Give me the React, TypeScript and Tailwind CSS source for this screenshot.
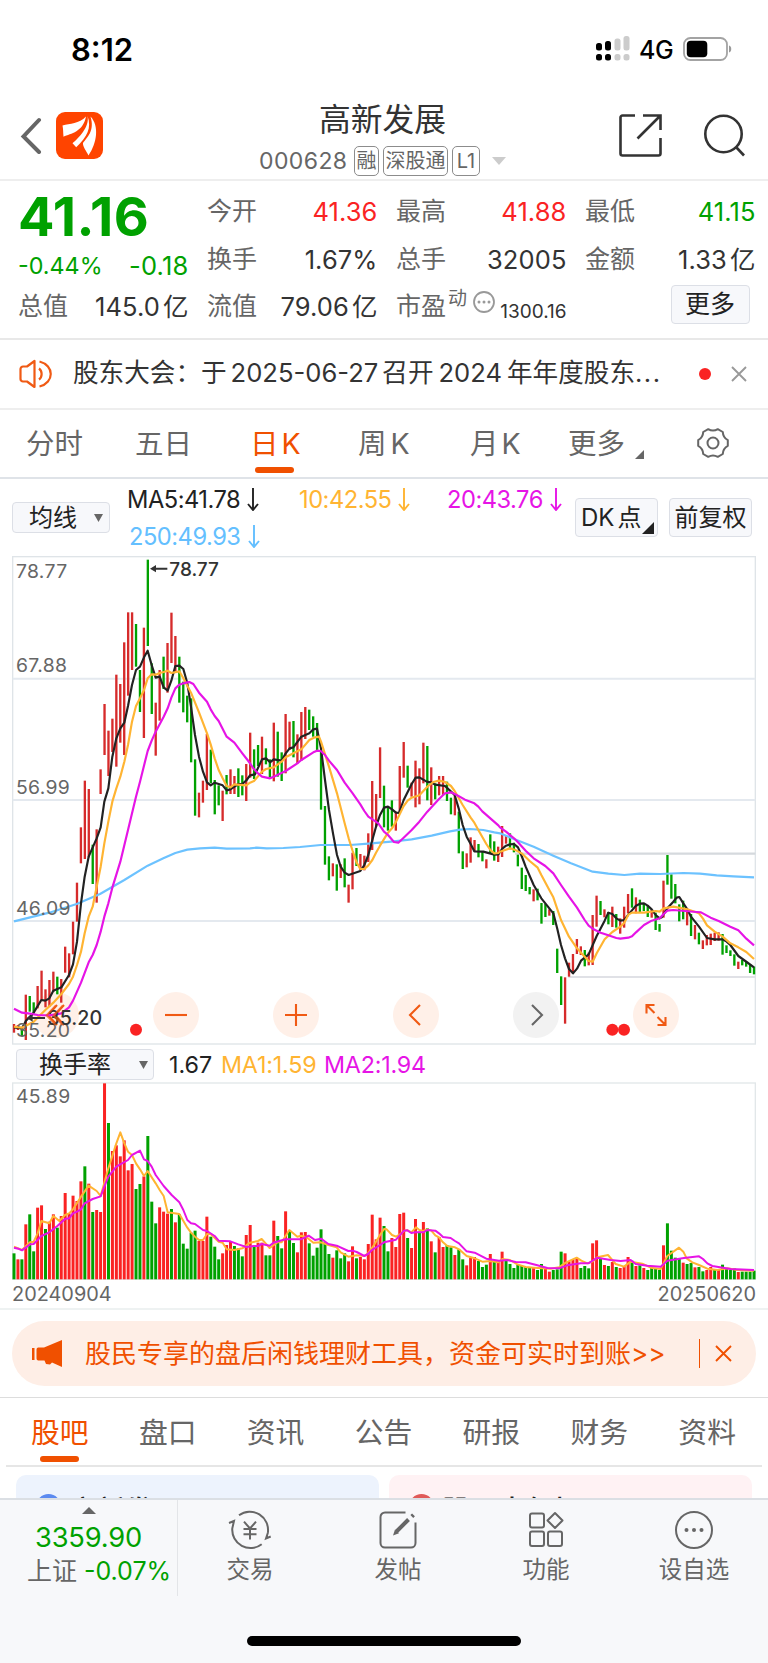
import React from 'react';

const CANDLES =
  'r1422-1448 r1425-1440 g1435-1458 r1334-1470 g1338-1385 g1357-1390 r1308-1375 r1262-1350 r1318-1372 r1290-1370 r1265-1325 g1280-1333 r1287-1358 r1190-1268 r1210-1282 r1115-1213 r998-1115 r832-940 r692-927 r717-922 g884-1002 r838-1058 r658-732 r462-615 r542-678 r506-606 r374-650 r402-578 r277-615 r187-437 r187-360 g222-350 g360-486 r233-564 g29-288 g340-492 r458-617 r360-512 g320-417 r279-428 r188-339 r258-365 g320-458 g395-487 g437-517 g445-637 g628-797 r728-802 r692-758 r552-720 g599-700 g690-793 g706-766 r722-813 g675-733 r658-732 r678-732 g655-741 g676-736 r642-753 ' +
  'r548-683 g598-687 g585-648 r560-672 g595-643 g628-682 r518-694 g545-680 g607-693 r492-670 r515-600 g513-622 r553-640 r486-632 r471-567 g479-540 g499-560 g519-606 g602-779 g768-944 g919-991 r940-979 g943-1022 r943-984 g925-1012 r1004-1058 r908-1018 g894-948 r912-960 r917-961 r850-936 r693-900 r732-830 r592-744 g707-832 g770-842 g751-830 r785-842 r648-788 r576-683 g647-713 r698-740 r632-772 r655-763 r578-700 g588-751 r652-765 g700-748 r678-736 r678-736 g695-753 g743-793 r735-796 g785-910 g904-957 r910-952 r862-938 r870-905 g882-922 g905-934 r928-955 g853-912 g874-932 r890-936 ' +
  'r828-921 r858-881 g850-898 g878-907 g914-949 g953-1017 g975-1023 g1011-1033 r1018-1054 g1016-1051 g1059-1121 g1062-1101 r1078-1097 g1083-1125 g1196-1269 g1279-1365 r1282-1421 r1238-1280 r1212-1270 r1167-1212 r1189-1215 g1200-1249 r1208-1246 r1095-1245 r1037-1130 g1053-1095 r1078-1102 g1086-1123 r1070-1131 g1092-1133 r1105-1151 r1070-1133 r1032-1090 g1015-1073 r1042-1090 g1049-1088 g1062-1083 g1065-1101 r1080-1103 g1088-1140 g1122-1145 r992-1103 g915-1004 g973-1046 g1002-1060 g1063-1114 g1052-1108 r1078-1126 g1092-1158 r1125-1168 g1148-1183 r1171-1197 r1155-1186 r1151-1185 r1148-1173 r1147-1172 g1152-1214 g1186-1209 g1201-1218 g1213-1247 r1235-1257 g1230-1246 g1235-1250 g1242-1269 g1250-1273';

const TURNOVER =
  'g640 r658 g658 r553 g523 g634 r503 r496 g567 r545 r523 g563 r528 r459 r520 r467 r483 r424 g379 r431 g516 r510 r516 r130 g249 r333 r316 r349 r301 r391 r372 g447 g432 r409 g288 g485 g550 r502 r515 r521 g507 r547 g523 g611 g626 g578 g572 r603 r603 r530 g590 g620 g658 r640 r615 r606 g618 g625 g649 r585 r555 g617 r608 r608 g646 g646 r542 g588 g625 r514 g572 g609 r637 r577 r576 g610 g647 g623 g568 g607 g642 r653 g631 g655 g640 r664 r619 g655 r651 r658 r612 r524 r598 r533 g558 ' +
  'g634 r594 r621 r522 r518 g594 r624 r537 g575 r546 g565 r604 g637 r591 r621 g615 g622 r645 g628 g658 r676 r653 r651 g663 g681 g674 r642 g665 r665 r635 g660 g672 g684 g675 g678 g681 g684 r684 g690 g672 r686 r695 g690 g688 g635 r640 r664 r658 r654 g684 g678 g685 r610 r601 g655 r675 g678 r666 g681 r684 r678 r651 g662 r678 g676 r684 g690 g684 g687 g690 r616 g550 g632 g653 g655 r668 g672 g669 r682 g681 g694 r690 r681 g690 r690 g674 g684 g690 g685 r696 g695 g695 g695 g692';

type Segment = [dx: number, dy: number, points: string];

function joinSegments(segments: Segment[]): string {
  return segments
    .flatMap(([dx, dy, points]) =>
      points.split(' ').map((p) => {
        const [x, y] = p.split(',').map(Number);
        return `${x + dx},${y + dy}`;
      }),
    )
    .join(' ');
}

const MA5 = joinSegments([
  [0, 0, '42,1432 66,1435 78,1412 101,1388 124,1350 136,1352 148,1345 160,1322 184,1312 207,1275 219,1243 231,1175 243,1060 254,980 266,920 290,865 302,832 313,755 325,715 337,620 349,565 361,535 373,518 384,468 396,405 408,360 420,350 432,322 443,302 455,345 467,383 479,380 491,412 503,422 514,392 526,348 538,347 550,357 562,400 573,470 585,555 597,620 609,665 621,697 632,706 644,698 668,706 680,721 691,718 715,702 727,702 740,690'],
  [750, 390, '0,286 15,283 36,238 48,235 60,247 71,238 95,242 107,220 119,205 130,202 154,170 178,160 190,148 201,146 213,205 225,300 237,390 249,460 261,525 272,560 284,578 296,585 331,573 343,555 355,525 367,480 378,440 390,405 402,383 414,380 426,388 438,398 447,399 461,360 485,312 497,293 508,292 530,305 545,308 555,314 585,318 600,332 614,345 626,385 638,435 650,470 662,492 673,514 700,515 733,524 745,523'],
  [1500, 690, '6,207 18,197 30,193 42,192 54,202 65,228 77,260 101,315 124,355 148,385 160,400 172,447 183,495 195,535 207,567 219,580 231,566 243,542 266,523 290,468 314,422 325,398 337,402 349,415 361,422 373,420 385,404 408,377 420,371 432,370 443,377 455,388 467,405 479,415 485,412 502,385 520,365 530,353 538,351 550,370 562,388 573,410 597,440 621,474 644,478 668,478 680,485 691,495 715,528 740,546 762,562'],
]);

const MA10 = joinSegments([
  [0, 0, '42,1430 66,1433 101,1415 136,1380 160,1358 184,1332 207,1302 219,1280 231,1245 243,1205 254,1150 266,1100 278,1070 290,1010 302,950 313,880 325,815 337,755 349,715 361,680 373,635 384,585 396,515 408,468 420,445 432,420 443,385 455,373 467,374 479,369 491,366 503,362 514,369 538,364 550,385 573,428 597,487 621,550 632,583 644,625 656,660 668,685 680,708 691,712 703,703 739,706'],
  [750, 390, '0,308 12,303 36,275 48,267 71,262 95,245 107,232 130,220 154,208 178,180 195,172 207,170 213,185 237,260 261,340 284,430 296,475 308,513 320,548 331,567 343,567 355,556 367,540 378,518 390,497 414,458 426,445 438,425 461,378 473,362 485,353 508,346 532,320 550,306 567,302 585,306 603,318 614,333 638,375 662,413 673,428 685,450 709,492 721,510 733,520 745,519'],
  [1500, 690, '0,215 30,205 48,211 65,220 89,243 113,263 124,285 148,330 160,352 183,420 207,470 231,505 254,530 266,543 278,545 290,520 314,478 337,456 361,440 373,428 385,404 396,398 432,398 467,393 479,395 491,385 520,380 562,388 597,400 609,416 621,436 644,455 668,470 691,490 715,502 739,516 762,537'],
]);

const MA20 = joinSegments([
  [0, 0, '42,1376 66,1388 90,1391 113,1395 148,1396 184,1390 207,1372 219,1352 231,1325 243,1298 266,1237 278,1215 290,1185 302,1145 313,1100 325,1060 337,1013 361,935 384,840 408,740 420,695 443,603 455,572 467,545 491,500 503,475 514,443 526,415 538,404 550,400 562,397 568,396 580,402 597,428 621,455 632,478 644,498 656,513 680,560 703,578 727,610 745,633'],
  [750, 390, '0,250 12,268 24,280 36,290 60,295 71,290 107,273 142,250 154,240 190,217 201,212 212,213 225,225 237,242 261,270 284,308 308,340 331,373 343,393 355,410 385,430 402,455 414,465 432,486 445,488 461,473 485,450 508,425 532,395 567,357 585,340 603,337 620,345 645,359 673,370 685,380 697,394 721,415 745,436'],
  [1500, 690, '0,142 18,155 42,175 54,187 77,212 101,235 136,258 160,280 183,315 207,350 231,383 254,420 266,437 278,446 302,458 325,466 349,474 361,476 385,473 396,469 408,457 432,435 455,422 479,415 491,402 502,392 520,390 590,396 603,397 632,413 656,423 691,440 715,451 739,476 762,496'],
]);

const MA250 = joinSegments([
  [0, 0, '42,1114 148,1088 230,1062 300,1032 373,990 443,947 490,925 526,909 562,899 600,895 644,893 680,896'],
  [750, 390, '0,505 20,503 50,505 100,504 150,501 212,495 300,495 355,491 432,484 485,478 545,467 600,454 630,449 660,447 700,450 733,457'],
  [1500, 690, '0,160 42,177 101,200 160,227 213,250 278,275 325,281 373,285 420,281 480,282 550,279 600,281 650,286 700,289 762,292'],
]);

const VOL_MA1 = joinSegments([
  [0, 0, '42,620 66,630 78,618 90,607 101,605 113,580 124,543 148,550 160,528 178,543 195,525 207,520 219,508 243,470 266,437 290,453 302,468 325,385 349,310 361,277 373,310 384,335 396,345 408,370 420,388 432,408 443,393 467,430 479,450 491,468 503,517 538,522 562,563 573,578 585,590 597,600 609,600 621,582 632,582 656,605 668,608 680,628 703,630 727,625 750,608 774,603 785,597 797,610 809,624 832,607 845,607 868,570 892,590 903,587 920,592 940,608 963,607 985,615 1010,622 1022,637 1045,650 1070,646 1093,648 1104,640 1122,615 1140,585 1152,567'],
  [1152, 0, '8,568 24,585 36,590 48,583 60,573 70,570 82,577 96,562 106,570 118,573 130,568 142,572 154,586 165,592 177,607 190,618 213,622 225,628 248,648 272,655 295,665 320,663 343,667 355,657 378,660 400,673 425,681 450,683 475,685 500,686 525,682 545,668 578,653 592,662 610,670 625,665 640,652 672,645 695,672 720,680 740,665 775,671 800,683 830,687 850,648 885,623 898,635 908,655 925,667 945,675 970,686 1000,690 1030,685 1060,690 1110,692'],
]);

const VOL_MA2 = joinSegments([
  [0, 0, '42,623 55,626 66,631 78,622 90,613 101,612 124,588 148,577 172,558 195,537 207,535 219,520 231,515 243,508 254,490 278,477 302,469 313,440 325,410 349,380 361,373 384,360 396,345 420,332 432,358 443,363 455,380 467,405 491,438 515,465 538,487 550,510 562,540 573,550 585,552 609,570 621,573 644,588 656,602 691,604 715,613 739,621 762,618 774,618 785,612 809,617 820,608 856,598 903,598 926,587 945,600 963,596 985,612 1010,617 1045,633 1058,632 1070,636 1093,648 1104,642 1116,630 1140,615'],
  [1152, 0, '0,607 36,599 60,572 70,571 82,579 94,577 106,577 118,577 130,570 154,572 165,580 177,591 200,594 213,603 225,610 248,634 272,638 307,656 345,662 370,660 395,666 425,667 460,676 490,684 525,685 550,676 590,670 613,670 640,653 680,660 710,663 740,660 755,672 790,677 830,680 850,662 900,654 945,649 957,657 970,670 985,678 1040,687 1110,690'],
]);

const barX = (i: number) => 42 + i * 11.809;

function StatusBar() {
  return (
    <div className="flex h-[90px] shrink-0 items-center justify-between pr-[36px] pl-[71px] pt-[8px]">
      <span className="text-[31px] leading-none font-semibold text-black">8:12</span>
      <div className="flex items-center">
        <svg className="h-[26px] w-[36px]" viewBox="0 0 36 26">
          <g fill="#000">
            <rect x="1" y="7" width="6" height="7.5" rx="2.5" />
            <rect x="10" y="5" width="6" height="9.5" rx="2.5" />
            <rect x="1" y="18" width="6" height="6.5" rx="2.5" />
            <rect x="10" y="18" width="6" height="6.5" rx="2.5" />
          </g>
          <g fill="#ccc">
            <rect x="19.5" y="2.5" width="6" height="12" rx="2.5" />
            <rect x="28.5" y="0" width="6" height="14.5" rx="2.5" />
            <rect x="19.5" y="18" width="6" height="6.5" rx="2.5" />
            <rect x="28.5" y="18" width="6" height="6.5" rx="2.5" />
          </g>
        </svg>
        <span className="ml-[8px] w-[38px] pt-[2px] text-[25px] leading-none font-medium tracking-[-0.500px] text-black">4G</span>
        <svg className="ml-[6px] h-[24px] w-[49px]" viewBox="0 0 49 24">
          <rect x="1" y="1" width="43" height="22" rx="6.5" fill="none" stroke="#a3a3a3" strokeWidth="1.8" />
          <rect x="3.8" y="3.8" width="20.5" height="16.4" rx="4" fill="#000" />
          <path d="M46 8.5c3 .8 3 6.200 0 7z" fill="#999" />
        </svg>
      </div>
    </div>
  );
}

function Badge({ children, className }: { children: React.ReactNode; className: string }) {
  return (
    <span className={`flex h-[30px] items-center justify-center rounded-[5px] border-[1.5px] border-[#8c8c8c] text-[20px] leading-none text-[#666] ${className}`}>
      {children}
    </span>
  );
}

function Header() {
  return (
    <header className="flex h-[91px] shrink-0 justify-between border-b-2 border-[#eee] pr-[22px] pl-[20px]">
      <div className="flex w-[221px] items-start pt-[22px]">
        <svg className="mt-[4px] h-[38px] w-[22px]" viewBox="0 0 22 38" fill="none" stroke="#666" strokeWidth="4" strokeLinecap="round">
          <path d="M19 4 3.500 20.500 19 36" />
        </svg>
        <svg className="ml-[14px] h-[47px] w-[47px]" viewBox="0 0 47 47">
          <rect width="47" height="47" rx="9" fill="#ff4400" />
          <g fill="#fff">
            <path d="M30 4.500C23 12 14 11.500 6.500 13.500c.8 3.500.6 7 1 11.200C15 21.500 27 20 30 4.500z" />
            <path d="M31.500 4C34 15 22 26.500 16.500 31.300l3.700 4C31 25 36 16 31.500 4z" />
            <path d="M34.500 4.500C39 19 31 25.500 27 31c-.5 3.500 3.500 8 5.500 12.500C41 31 43.500 14 34.500 4.500z" />
          </g>
        </svg>
      </div>
      <div className="flex flex-col items-center pt-[12px]">
        <h1 className="text-[31.800px] leading-[36px] text-[#333]">高新发展</h1>
        <div className="mt-[8px] flex h-[30px] items-center">
          <span className="w-[95px] text-[23px] leading-none tracking-[0.4px] text-[#666]">000628</span>
          <Badge className="w-[25px]">融</Badge>
          <Badge className="ml-[4px] w-[65px]">深股通</Badge>
          <Badge className="ml-[4px] w-[28px]">L1</Badge>
          <svg className="ml-[12px] h-[8px] w-[14px]" viewBox="0 0 14 8">
            <path d="M0 0h14L7 8z" fill="#ccc" />
          </svg>
        </div>
      </div>
      <div className="flex w-[222px] items-start justify-end gap-[40px] pt-[23px]">
        <svg className="h-[44px] w-[44px]" viewBox="0 0 44 44" fill="none" stroke="#333" strokeWidth="2.600">
          <path d="M17 2.500H4.500a2 2 0 0 0-2 2v36a2 2 0 0 0 2 2h36a2 2 0 0 0 2-2V25M25 2.500h17.500V17M42 3 19.500 25.500" />
        </svg>
        <svg className="h-[44px] w-[44px]" viewBox="0 0 44 44" fill="none" stroke="#333" strokeWidth="2.600">
          <circle cx="21.500" cy="21" r="18.200" />
          <path d="m34 34 8 8.500" />
        </svg>
      </div>
    </header>
  );
}

function Field({ label, value, unit, tone = 'text-[#333]' }: { label: string; value: string; unit?: string; tone?: string }) {
  return (
    <div className="flex h-[47.500px] items-center justify-between">
      <span className="text-[25px] leading-none text-[#666]">{label}</span>
      <span className={`text-[25.500px] leading-none tracking-[0.100px] ${tone}`}>
        {value}
        {unit && <span className="ml-[3px]">{unit}</span>}
      </span>
    </div>
  );
}

function Quote() {
  return (
    <section className="grid h-[159px] shrink-0 grid-cols-[170.500px_170.500px_170.500px_170.500px] gap-x-[18.500px] border-b-2 border-[#e8e8e8] pt-[7px] pl-[18px]">
      <div>
        <div className="flex h-[57px] items-center text-[54px] leading-none font-bold tracking-[0.400px] text-[#00a100]">41.16</div>
        <div className="flex h-[38px] items-center justify-between pt-[4px] leading-none text-[#00a100]">
          <span className="text-[23.300px]">-0.44%</span>
          <span className="text-[25.500px] tracking-[0.200px]">-0.18</span>
        </div>
        <Field label="总值" value="145.0" unit="亿" />
      </div>
      <div>
        <Field label="今开" value="41.36" tone="text-[#fa2323]" />
        <Field label="换手" value="1.67%" />
        <Field label="流值" value="79.06" unit="亿" />
      </div>
      <div>
        <Field label="最高" value="41.88" tone="text-[#fa2323]" />
        <Field label="总手" value="32005" />
        <div className="flex h-[47.500px] items-center">
          <span className="text-[25px] leading-none text-[#666]">市盈</span>
          <span className="ml-[2px] mb-[16px] text-[19px] leading-none text-[#666]">动</span>
          <svg className="ml-[6px] mb-[10px] h-[22px] w-[22px]" viewBox="0 0 22 22">
            <circle cx="11" cy="11" r="10" fill="none" stroke="#999" strokeWidth="1.800" />
            <g fill="#999"><circle cx="6" cy="11" r="1.500" /><circle cx="11" cy="11" r="1.500" /><circle cx="16" cy="11" r="1.500" /></g>
          </svg>
          <span className="mt-[9px] ml-auto text-[19px] leading-none text-[#333]">1300.16</span>
        </div>
      </div>
      <div>
        <Field label="最低" value="41.15" tone="text-[#00a100]" />
        <Field label="金额" value="1.33" unit="亿" />
        <button className="mt-[2px] mr-[6px] ml-auto flex h-[39px] w-[79px] items-center justify-center rounded-[4px] border-[1.500px] border-[#dcdfe6] bg-[#f7f8fb] text-[25px] leading-none text-[#222]">更多</button>
      </div>
    </section>
  );
}

function Notice() {
  return (
    <section className="flex h-[70px] shrink-0 items-center border-b-2 border-[#eee] pl-[19px]">
      <svg className="h-[30px] w-[34px]" viewBox="0 0 34 30" fill="none" stroke="#f05a14" strokeWidth="2.200" strokeLinejoin="round">
        <path d="M15.500 2v26L8 22.500H4a2.500 2.500 0 0 1-2.500-2.500V10A2.500 2.500 0 0 1 4 7.500h4z" />
        <path d="M20 9.500c3.500 2.500 3.500 8.500 0 11M20.500 2.500c15 4 15 21 0 25" />
      </svg>
      <p className="ml-[20px] w-[590px] pb-[2px] text-[25.600px] leading-none whitespace-nowrap text-[#333]">
        股东大会：于<span className="mr-[4px] ml-[4px]">2025-06-27</span>召开<span className="mr-[5px] ml-[5px]">2024</span>年年度股东<span className="tracking-[1.500px]">...</span>
      </p>
      <span className="ml-[36px] h-[12px] w-[12px] rounded-full bg-[#fa2323]" />
      <svg className="ml-[20px] h-[16px] w-[16px]" viewBox="0 0 16 16" stroke="#999" strokeWidth="1.900">
        <path d="m1 1 14 14M15 1 1 15" />
      </svg>
    </section>
  );
}

function PeriodTabs() {
  const item = 'flex h-[32px] items-center text-[28.500px] leading-none whitespace-nowrap text-[#666]';
  return (
    <nav className="flex h-[69px] shrink-0 items-start border-b-2 border-[#dfe3e8] pt-[18px] pl-[26px]">
      <span className={`w-[109px] ${item}`}>分时</span>
      <span className={`w-[115px] ${item}`}>五日</span>
      <div className="flex w-[108px] flex-col text-[#f05000]">
        <span className="flex h-[32px] items-center text-[28.500px] leading-none whitespace-nowrap">日<span className="ml-[3px]">K</span></span>
        <span className="mt-[7px] ml-[5px] h-[6px] w-[39px] rounded-full bg-[#f05000]" />
      </div>
      <span className={`w-[112px] ${item}`}>周<span className="ml-[4px]">K</span></span>
      <span className={`w-[98px] ${item}`}>月<span className="ml-[3px]">K</span></span>
      <span className={`w-[128px] ${item}`}>
        更多
        <svg className="mt-[20px] ml-[10px] h-[9px] w-[9px]" viewBox="0 0 8 8"><path d="M8 0v8H0z" fill="#666" /></svg>
      </span>
      <svg className="-mt-[1px] h-[32px] w-[34px]" viewBox="0 0 34 32" fill="none" stroke="#666" strokeWidth="2">
        <path d="M12.200 2.200Q17 5 21.800 2.200L26.800 5Q27 10.500 31.800 13.200V18.800Q27 21.500 26.800 27L21.800 29.800Q17 27 12.200 29.800L7.200 27Q7 21.500 2.200 18.800V13.200Q7 10.500 7.200 5z" strokeLinejoin="round" />
        <circle cx="17" cy="16" r="5.500" />
      </svg>
    </nav>
  );
}

function Down() {
  return (
    <svg className="ml-[7px] h-[23px] w-[12px]" viewBox="0 0 12 23" fill="none" stroke="currentColor" strokeWidth="1.900">
      <path d="M6 0v22M1 16l5 6 5-6" />
    </svg>
  );
}

function Indicators() {
  const button = 'flex items-center rounded-[4px] border-[1.500px] border-[#dcdfe6] bg-[#f7f8fb] text-[24px] leading-none text-[#222]';
  const ma = 'flex h-[37px] items-center text-[23.700px] leading-none tracking-[-0.500px]';
  return (
    <section className="flex h-[77px] shrink-0 pl-[12px]">
      <div className={`mt-[23px] h-[31px] w-[98px] justify-between pr-[6px] pl-[16px] ${button}`}>
        均线
        <svg className="h-[8px] w-[9px]" viewBox="0 0 9 8"><path d="M0 0h9L4.500 8z" fill="#666" /></svg>
      </div>
      <div className="ml-[17px] grid w-[448px] grid-cols-[172px_148px_128px] content-start pt-[2px]">
        <span className={`text-[#222] ${ma}`}>MA5:41.78<Down /></span>
        <span className={`text-[#ffb432] ${ma}`}>10:42.55<Down /></span>
        <span className={`text-[#e614e6] ${ma}`}>20:43.76<Down /></span>
        <span className={`pl-[2px] text-[#64bfff] ${ma}`}>250:49.93<Down /></span>
      </div>
      <div className={`mt-[19px] h-[39px] w-[83px] pl-[5px] ${button}`}>
        DK<span className="ml-[3px]">点</span>
        <svg className="mt-[20px] ml-[1px] h-[12px] w-[12px]" viewBox="0 0 11 11"><path d="M11 0v11H0z" fill="#222" /></svg>
      </div>
      <div className={`mt-[19px] ml-[11px] h-[39px] w-[83px] justify-center ${button}`}>前复权</div>
    </section>
  );
}

function RoundButton({ children, muted = false }: { children: React.ReactNode; muted?: boolean }) {
  return (
    <button className={`flex h-[46px] w-[46px] items-center justify-center rounded-full ${muted ? 'bg-[#f2f2f2]' : 'bg-[#fff0e8]'}`}>
      <svg className="h-[24px] w-[24px]" viewBox="0 0 24 24" fill="none" stroke={muted ? '#666' : '#f05a14'} strokeWidth="2.100">
        {children}
      </svg>
    </button>
  );
}

function PriceChart() {
  return (
    <section className="relative mx-[12px] h-[489px] shrink-0">
      <div className="absolute top-[436px] left-[21px] flex gap-[74px]">
        <RoundButton><path d="m13 2-9 10 9 10M20 2l-9 10 9 10" /></RoundButton>
        <RoundButton><path d="M1 12h22" /></RoundButton>
        <RoundButton><path d="M1 12h22M12 1v22" /></RoundButton>
        <RoundButton><path d="M16 2 6 12l10 10" /></RoundButton>
        <RoundButton muted><path d="m8 2 10 10L8 22" /></RoundButton>
        <RoundButton><path d="M10.500 2H2.500v8.500M2.500 2l8 8M13.500 22H21.500V14M21.500 22l-8-8" /></RoundButton>
      </div>
      <svg className="pointer-events-none relative h-[489px] w-[744px]" viewBox="36 18 2232 1467">
        <rect x="38" y="20" width="2228" height="1462" fill="none" stroke="#dfe4e8" strokeWidth="4" />
        <path d="M38 386H2266M38 750H2266M38 1113H2266" stroke="#e4e9ef" strokeWidth="6" />
        <path d="M1545 911H2266" stroke="#d5d9dd" strokeWidth="7" />
        <path d="M1705 1281H2266" stroke="#e0e1e6" strokeWidth="6" />
        {CANDLES.split(' ').map((c, i) => {
          const [hi, lo] = c.slice(1).split('-').map(Number);
          return <rect key={i} x={barX(i) - 3.500} y={hi} width="7" height={lo - hi} fill={c[0] === 'r' ? '#d62b2b' : '#00a100'} />;
        })}
        <g fill="none" strokeWidth="6.500" strokeLinejoin="round">
          <polyline points={MA250} stroke="#6cc2ff" />
          <polyline points={MA5} stroke="#222" />
          <polyline points={MA10} stroke="#ffb432" />
          <polyline points={MA20} stroke="#e614e6" />
        </g>
        <g fill="#666" fontSize="58" letterSpacing="1">
          <text x="48" y="83">78.77</text>
          <text x="48" y="366">67.88</text>
          <text x="48" y="731">56.99</text>
          <text x="48" y="1095">46.09</text>
          <text x="48" y="1460">35.20</text>
        </g>
        <g fill="#333" stroke="#333">
          <path d="M502 56H465M135 1404H95" strokeWidth="6" />
          <path d="m450 56 18-11v22zM80 1404l18-11v22z" stroke="none" />
          <text x="508" y="77" fontSize="57" fontWeight="500" stroke="none">78.77</text>
          <text x="142" y="1425" fontSize="59" fontWeight="500" stroke="none">35.20</text>
        </g>
        <path d="m167 1367-27 29 27 29M188 1367l-27 29 27 29" fill="none" stroke="#f05a14" strokeOpacity=".7" strokeWidth="6" />
        <g fill="#fa2323">
          <circle cx="408" cy="1439" r="18" /><circle cx="1837" cy="1439" r="18" /><circle cx="1872" cy="1439" r="18" />
        </g>
      </svg>
    </section>
  );
}

function Turnover() {
  return (
    <section className="flex h-[265px] shrink-0 flex-col border-b-2 border-[#eef2f2] px-[12px]">
      <div className="flex h-[37px] items-center pl-[4px] text-[23.300px] leading-none">
        <div className="mt-[2px] flex h-[31px] w-[138px] items-center justify-between rounded-[4px] border-[1.500px] border-[#dcdfe6] bg-[#f7f8fb] pr-[5px] pl-[22px] text-[24px] text-[#222]">
          换手率
          <svg className="h-[8px] w-[9px]" viewBox="0 0 9 8"><path d="M0 0h9L4.500 8z" fill="#666" /></svg>
        </div>
        <span className="mt-[2px] ml-[15px] w-[52px] text-[#222]">1.67</span>
        <span className="mt-[2px] w-[103px] tracking-[-0.200px] text-[#ffb432]">MA1:1.59</span>
        <span className="mt-[2px] tracking-[-0.200px] text-[#e614e6]">MA2:1.94</span>
      </div>
      <svg className="h-[198px] w-[744px] shrink-0" viewBox="36 126 2232 594">
        <rect x="38" y="129" width="2228" height="590" fill="none" stroke="#e2e7e9" strokeWidth="4" />
        {TURNOVER.split(' ').map((v, i) => (
          <rect key={i} x={barX(i) - 4.500} y={v.slice(1)} width="9" height={718 - Number(v.slice(1))} fill={v[0] === 'r' ? '#fa2323' : '#00a100'} />
        ))}
        <g fill="none" strokeWidth="6" strokeLinejoin="round">
          <polyline points={VOL_MA1} stroke="#ffb432" />
          <polyline points={VOL_MA2} stroke="#e614e6" />
        </g>
        <text x="48" y="188" fill="#666" fontSize="58" letterSpacing="1">45.89</text>
      </svg>
      <div className="flex h-[28px] items-center justify-between pt-[1px] text-[19.900px] leading-none text-[#666]">
        <span>20240904</span>
        <span>20250620</span>
      </div>
    </section>
  );
}

function Banner() {
  return (
    <section className="flex h-[88px] shrink-0 items-center border-b border-[#ddd] px-[12px]">
      <div className="flex h-[65px] w-full items-center rounded-full bg-[#feeee6] pl-[19px] text-[#f05000]">
        <svg className="h-[27px] w-[32px]" viewBox="0 0 32 27" fill="currentColor">
          <path d="M1 8h2.500v12H1zM7 7.500h6L31 0v27l-10-4.500-2 2-4-.5-1.500-3.500H7a2 2 0 0 1-1.500-2v-9a2 2 0 0 1 1.500-2z" />
        </svg>
        <span className="ml-[22px] w-[590px] text-[26px] leading-none whitespace-nowrap">股民专享的盘后闲钱理财工具，资金可实时到账&gt;&gt;</span>
        <span className="ml-[24px] h-[29px] w-px bg-[#f05000]" />
        <svg className="ml-[15px] h-[17px] w-[17px]" viewBox="0 0 17 17" stroke="currentColor" strokeWidth="1.900"><path d="m1 1 15 15M16 1 1 16" /></svg>
      </div>
    </section>
  );
}

function ContentTabs() {
  return (
    <nav className="mx-[6px] flex h-[69px] shrink-0 justify-between border-b-2 border-[#e6e6e6] pt-[19px] pr-[26px] pl-[25px] text-[28.800px] leading-none text-[#666]">
      <div className="flex flex-col items-center text-[#f05000]">
        <span className="flex h-[32px] items-center">股吧</span>
        <span className="mt-[7px] h-[6px] w-[39px] rounded-full bg-[#f05000]" />
      </div>
      {['盘口', '资讯', '公告', '研报', '财务', '资料'].map((t) => (
        <span key={t} className="flex h-[32px] items-center">{t}</span>
      ))}
    </nav>
  );
}

function Cards() {
  return (
    <section className="flex h-[31px] shrink-0 gap-[10px] overflow-hidden px-[16px] pt-[8px]">
      <div className="flex h-[80px] w-[363px] items-start rounded-[10px] bg-[#edf3fd] pt-[19px] pl-[20px]">
        <span className="h-[25px] w-[25px] rounded-full bg-[#5b8af0]" />
        <span className="ml-[8px] text-[28px] leading-[34px] font-medium text-[#222]">高新发展</span>
      </div>
      <div className="flex h-[80px] w-[363px] items-start rounded-[10px] bg-[#fff2f4] pt-[19px] pl-[20px]">
        <span className="h-[25px] w-[25px] rounded-full bg-[#e05a58]" />
        <span className="ml-[8px] text-[28px] leading-[34px] font-medium text-[#222]">股票大气坛</span>
      </div>
    </section>
  );
}

function Action({ label, className, children }: { label: string; className: string; children: React.ReactNode }) {
  return (
    <div className={`flex flex-col items-center pt-[9px] ${className}`}>
      <svg className="h-[42px] w-[44px]" viewBox="0 0 44 42" fill="none" stroke="#666" strokeWidth="2">{children}</svg>
      <span className="mt-[5px] text-[23.500px] leading-[28px] whitespace-nowrap text-[#666]">{label}</span>
    </div>
  );
}

function BottomBar() {
  return (
    <footer className="flex h-[165px] shrink-0 flex-col items-center border-t-2 border-[#dbdfe4] bg-[#f7f8fa]">
      <div className="flex h-[96px] w-full">
        <div className="flex w-[178px] flex-col items-center border-r-[1.500px] border-[#e3e5e8] pt-[7px]">
          <svg className="h-[7px] w-[14px]" viewBox="0 0 14 7"><path d="M7 0l7 7H0z" fill="#666" /></svg>
          <span className="mt-[7px] text-[27.300px] leading-[33px] tracking-[-0.200px] text-[#00a100]">3359.90</span>
          <span className="ml-[21px] flex items-center text-[25px] leading-[35px] whitespace-nowrap text-[#00a100]">
            <span className="mr-[7px] text-[25px] text-[#666]">上证</span>-0.07%
          </span>
        </div>
        <Action label="交易" className="ml-[36px] w-[72px]">
          <path d="M11 6.200A18.300 18.300 0 0 1 39.800 24L38 29.500 42.700 27.500M33.700 35.300A18.300 18.300 0 0 1 4.300 19.300L6 12 1 14M16 12.700l6 6.800 6-6.800M22 19.500v11M15.500 20h13M15.500 25.200h13" />
        </Action>
        <Action label="发帖" className="ml-[76px] w-[72px]">
          <path d="M29.500 3.500H9a4.500 4.500 0 0 0-4.500 4.500v26A4.500 4.500 0 0 0 9 38.500h26a4.500 4.500 0 0 0 4.500-4.500V13.500" />
          <path d="M20.500 22.500 32.500 10.500M35.800 7.500l1.700-1.700" strokeWidth="4" />
          <path d="m17 26.500 2-6 4 3.800z" fill="#666" stroke="none" />
        </Action>
        <Action label="功能" className="ml-[76px] w-[72px]">
          <rect x="6" y="4.500" width="14" height="14" rx="2" /><rect x="6" y="22.500" width="14" height="14.500" rx="2" /><rect x="24" y="22.500" width="14" height="14.500" rx="2" />
          <path d="M31 4 38.500 11.500 31 19 23.500 11.500z" strokeLinejoin="round" />
        </Action>
        <Action label="设自选" className="ml-[76px] w-[72px]">
          <circle cx="22" cy="21" r="18" />
          <g fill="#666" stroke="none"><circle cx="14.500" cy="21" r="2" /><circle cx="22" cy="21" r="2" /><circle cx="29.500" cy="21" r="2" /></g>
        </Action>
      </div>
      <div className="mt-[40px] h-[10px] w-[274px] rounded-full bg-black" />
    </footer>
  );
}

export default function App() {
  return (
    <main className="flex h-[1663px] w-[768px] flex-col overflow-hidden bg-white font-['Inter','Noto_Sans_CJK_SC',sans-serif] text-[#333]">
      <StatusBar />
      <Header />
      <Quote />
      <Notice />
      <PeriodTabs />
      <Indicators />
      <PriceChart />
      <Turnover />
      <Banner />
      <ContentTabs />
      <Cards />
      <BottomBar />
    </main>
  );
}
